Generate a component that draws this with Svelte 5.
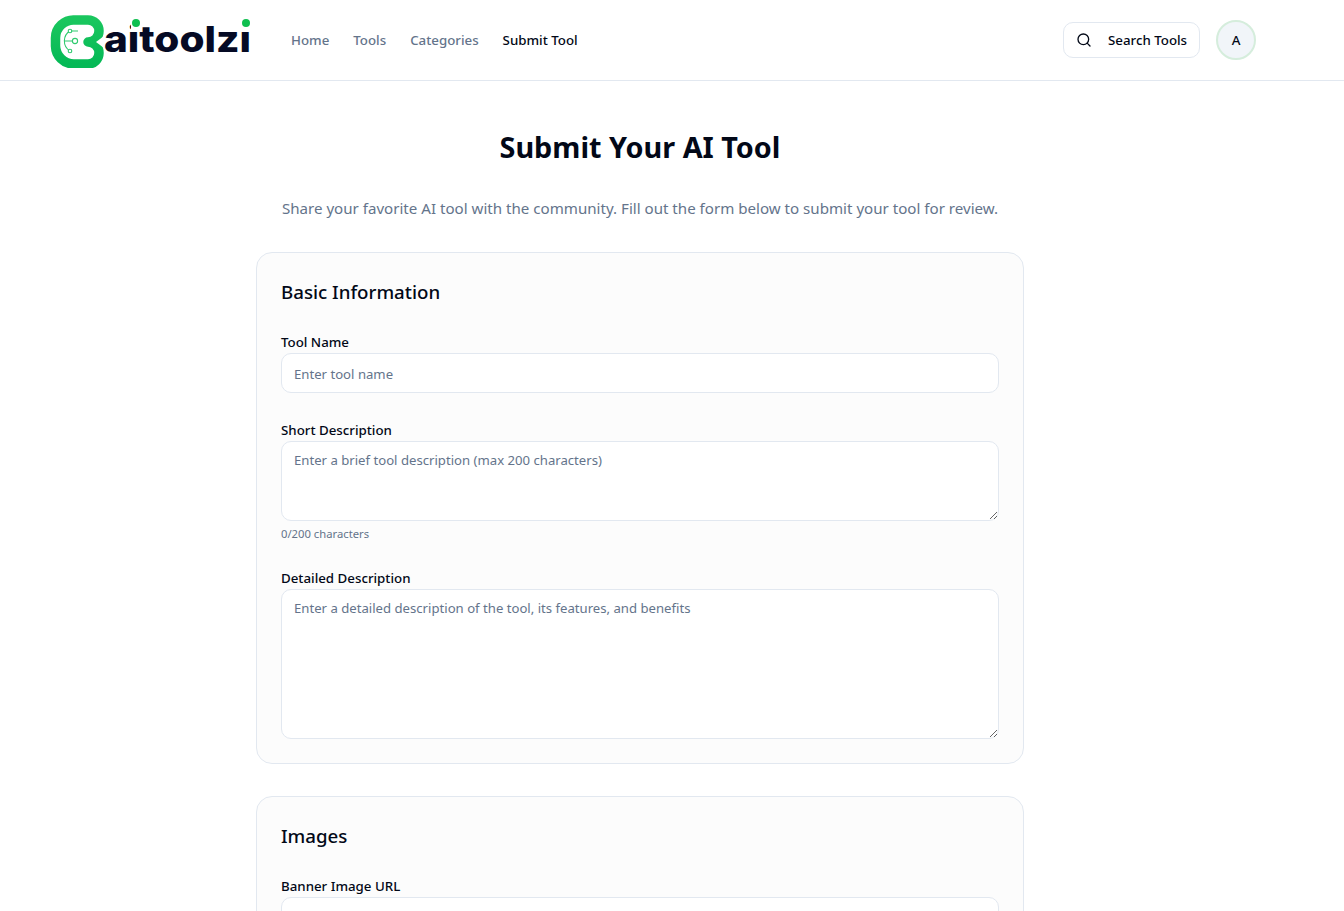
<script>
  const navLinks = [
    { label: 'Home', active: false },
    { label: 'Tools', active: false },
    { label: 'Categories', active: false },
    { label: 'Submit Tool', active: true }
  ];
</script>

<div class="topbar">
  <header class="inner">
    <a class="logo" href="#top" aria-label="aitoolzi">
      <svg width="202" height="56" viewBox="50 12 202 56">
        <defs>
          <linearGradient id="logoGreen" x1="0" y1="0" x2="0" y2="1">
            <stop offset="0" stop-color="#1ac65e" />
            <stop offset="1" stop-color="#05b956" />
          </linearGradient>
          <!-- drops the dark i dots so the green ones can sit higher -->
          <clipPath id="noDots">
            <rect x="100" y="12" width="31" height="50" />
            <rect x="131" y="31" width="11" height="31" />
            <rect x="142" y="12" width="99" height="50" />
            <rect x="241" y="31" width="11" height="31" />
          </clipPath>
        </defs>
        <path class="mark" d="M75 20H88A10.5 10.5 0 0 1 88 42A11 11 0 0 1 88 64H74A18.5 18.5 0 0 1 55.5 46V38A18 18 0 0 1 75 20Z" />
        <path class="notch" d="M104 36V48L96 42Z" />
        <g class="circuit">
          <path d="M70 31H78M70 31C63 35 62 46 70 51M64 41H73" />
          <circle cx="70" cy="31" r="1.8" />
          <circle cx="75" cy="41" r="2.6" />
          <circle cx="70" cy="51" r="1.8" />
        </g>
        <g clip-path="url(#noDots)">
          <text class="wordmark" transform="translate(104 52) scale(1.125 1)">aitoolzi</text>
        </g>
        <circle class="dot" cx="136" cy="23" r="4" />
        <circle class="dot" cx="246" cy="23" r="4" />
      </svg>
    </a>
    <nav>
      {#each navLinks as link}
        <a class:active={link.active} href="#top">{link.label}</a>
      {/each}
    </nav>
    <div class="spacer"></div>
    <button class="search">
      <svg width="16" height="16" viewBox="0 0 24 24" fill="none" stroke="currentColor" stroke-width="2" stroke-linecap="round" stroke-linejoin="round">
        <circle cx="11" cy="11" r="8" />
        <path d="m21 21-4.3-4.3" />
      </svg>
      <span>Search Tools</span>
    </button>
    <div class="avatar">A</div>
  </header>
</div>

<main class="inner">
  <h1>Submit Your AI Tool</h1>
  <p class="lead">Share your favorite AI tool with the community. Fill out the form below to submit your tool for review.</p>

  <form>
    <section class="card">
      <h2>Basic Information</h2>
      <div class="field">
        <label for="name">Tool Name</label>
        <input id="name" placeholder="Enter tool name" />
      </div>
      <div class="field">
        <label for="short">Short Description</label>
        <textarea id="short" class="short" placeholder="Enter a brief tool description (max 200 characters)"></textarea>
        <small>0/200 characters</small>
      </div>
      <div class="field">
        <label for="long">Detailed Description</label>
        <textarea id="long" class="long" placeholder="Enter a detailed description of the tool, its features, and benefits"></textarea>
      </div>
    </section>

    <section class="card">
      <h2>Images</h2>
      <div class="field">
        <label for="banner">Banner Image URL</label>
        <input id="banner" placeholder="Enter banner image URL" />
      </div>
    </section>
  </form>
</main>

<style>
  :global(body) {
    background: #fff;
    color: #020817;
    font-family: "Noto Sans", "Open Sans", sans-serif;
  }

  .inner {
    width: 1280px;
    box-sizing: border-box;
  }

  .topbar {
    border-bottom: 1px solid #e2e8f0;
  }

  header {
    height: 80px;
    padding: 0 24px 0 50px;
    display: flex;
    align-items: center;
  }

  .logo {
    display: flex;
    width: 241px;
  }

  .mark {
    fill: none;
    stroke: url(#logoGreen);
    stroke-width: 9.5;
    stroke-linejoin: round;
  }

  .notch {
    fill: #fff;
  }

  .circuit path {
    fill: none;
    stroke: #2fca6e;
    stroke-width: 1.1;
  }

  .circuit circle {
    fill: #fff;
    stroke: #2fca6e;
    stroke-width: 1.1;
  }

  .wordmark {
    font-family: "Inter", sans-serif;
    font-size: 36px;
    font-weight: 800;
    fill: #050a24;
  }

  .dot {
    fill: #0fbf4f;
  }

  nav {
    display: flex;
    gap: 24px;
  }

  nav a {
    font-size: 13.3px;
    font-weight: 500;
    color: #64748b;
    text-decoration: none;
  }

  nav a.active {
    color: #020817;
  }

  .spacer {
    flex: 1;
  }

  .search {
    width: 137px;
    height: 36px;
    display: flex;
    align-items: center;
    gap: 16px;
    padding: 0 12px;
    background: #fff;
    border: 1px solid #e2e8f0;
    border-radius: 10px;
    font: inherit;
    font-size: 13.3px;
    font-weight: 500;
    color: #020817;
  }

  .search svg {
    flex: none;
  }

  .search span {
    white-space: nowrap;
  }

  .avatar {
    width: 40px;
    height: 40px;
    margin-left: 16px;
    box-sizing: border-box;
    display: flex;
    align-items: center;
    justify-content: center;
    border: 2px solid #d5eddc;
    border-radius: 50%;
    background: #f1f5f9;
    font-size: 13.3px;
    font-weight: 500;
  }

  main {
    padding-top: 48px;
  }

  h1 {
    margin: 0;
    text-align: center;
    font-size: 28.8px;
    line-height: 36px;
    font-weight: 700;
  }

  .lead {
    margin: 31px 0 32px;
    text-align: center;
    font-size: 15.12px;
    line-height: 24px;
    color: #64748b;
  }

  form {
    width: 768px;
    margin: 0 auto;
    display: flex;
    flex-direction: column;
    gap: 32px;
  }

  .card {
    padding: 24px;
    background: #fcfcfc;
    border: 1px solid #e2e8f0;
    border-radius: 16px;
  }

  h2 {
    margin: 0 0 25px;
    font-size: 18.7px;
    line-height: 30px;
    font-weight: 500;
  }

  .field + .field {
    margin-top: 27px;
  }

  label {
    display: block;
    height: 21px;
    font-size: 13.3px;
    line-height: 20px;
    font-weight: 500;
  }

  input,
  textarea {
    display: block;
    width: 100%;
    box-sizing: border-box;
    background: #fff;
    border: 1px solid #e2e8f0;
    border-radius: 10px;
    padding: 8px 12px;
    font: inherit;
    font-size: 13.15px;
    line-height: 20px;
    color: #020817;
    outline: none;
  }

  input {
    height: 40px;
    padding: 9px 12px 7px;
  }

  input::placeholder,
  textarea::placeholder {
    color: #64748b;
    opacity: 1;
  }

  .short {
    height: 80px;
  }

  .long {
    height: 150px;
  }

  small {
    display: block;
    margin-top: 5px;
    font-size: 11.25px;
    line-height: 15px;
    color: #64748b;
  }
</style>
